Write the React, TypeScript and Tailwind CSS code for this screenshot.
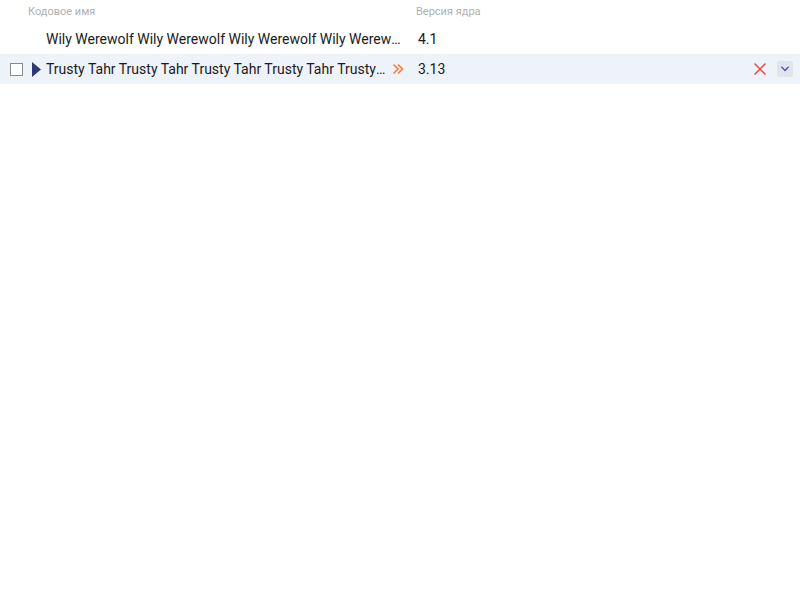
import { useState } from "react";

type Release = {
  id: string;
  name: string;
  kernel: string;
  expanded?: boolean;
};

const releases: Release[] = [
  { id: "wily", name: "Wily Werewolf Wily Werewolf Wily Werewolf Wily Werewolf Wily Werewolf", kernel: "4.1" },
  { id: "trusty", name: "Trusty Tahr Trusty Tahr Trusty Tahr Trusty Tahr Trusty Tahr Trusty Tahr", kernel: "3.13", expanded: true },
];

function Chevrons() {
  return (
    <svg width="12" height="12" viewBox="0 0 12 12" fill="none" stroke="#ff7a45" strokeWidth="1.6">
      <path d="M1.5 1.5 L6 6 L1.5 10.5" />
      <path d="M6 1.5 L10.5 6 L6 10.5" />
    </svg>
  );
}

export default function App() {
  const [checked, setChecked] = useState(false);

  return (
    <main className="min-h-screen bg-white text-[#1a1a1a]" style={{ fontFamily: "Roboto, 'Noto Sans', sans-serif" }}>
      <div className="flex h-[24px] items-center text-[11px] text-[#b0b0b0]">
        <div className="w-[416px] pl-[28px]">Кодовое имя</div>
        <div>Версия ядра</div>
      </div>
      {releases.map((r) => (
        <div key={r.id} className={`flex h-[30px] items-center text-[14px] ${r.expanded ? "bg-[#eef3fa]" : ""}`}>
          <div className="flex w-[46px] shrink-0 items-center">
            {r.expanded && (
              <>
                <button
                  className={`ml-[10px] h-[13px] w-[13px] border border-[#8a8a8a] bg-white ${checked ? "bg-[#3a4a8a]" : ""}`}
                  onClick={() => setChecked(!checked)}
                />
                <svg className="ml-[9px]" width="9" height="15" viewBox="0 0 9 15">
                  <path d="M0 0 L9 7.5 L0 15 Z" fill="#2e3a78" />
                </svg>
              </>
            )}
          </div>
          <div className="flex w-[370px] shrink-0 items-center pr-[12px]">
            <span className="min-w-0 flex-1 truncate">{r.name}</span>
            {r.expanded && (
              <span className="ml-[5px] shrink-0">
                <Chevrons />
              </span>
            )}
          </div>
          <div className="flex-1 pl-[2px]">{r.kernel}</div>
          {r.expanded && (
            <div className="flex items-center gap-[10px] pr-[7px]">
              <svg width="14" height="14" viewBox="0 0 14 14" stroke="#f0453f" strokeWidth="1.5" strokeLinecap="round">
                <path d="M2 2 L12 12 M12 2 L2 12" />
              </svg>
              <button className="flex h-[16px] w-[16px] items-center justify-center rounded-[2px] bg-[#e1e4ea]">
                <svg width="10" height="7" viewBox="0 0 10 7">
                  <path d="M0.5 0.8 L5 5.5 L9.5 0.8 L7.6 0.8 L5 3.6 L2.4 0.8 Z" fill="#3f5aa0" />
                </svg>
              </button>
            </div>
          )}
        </div>
      ))}
    </main>
  );
}
